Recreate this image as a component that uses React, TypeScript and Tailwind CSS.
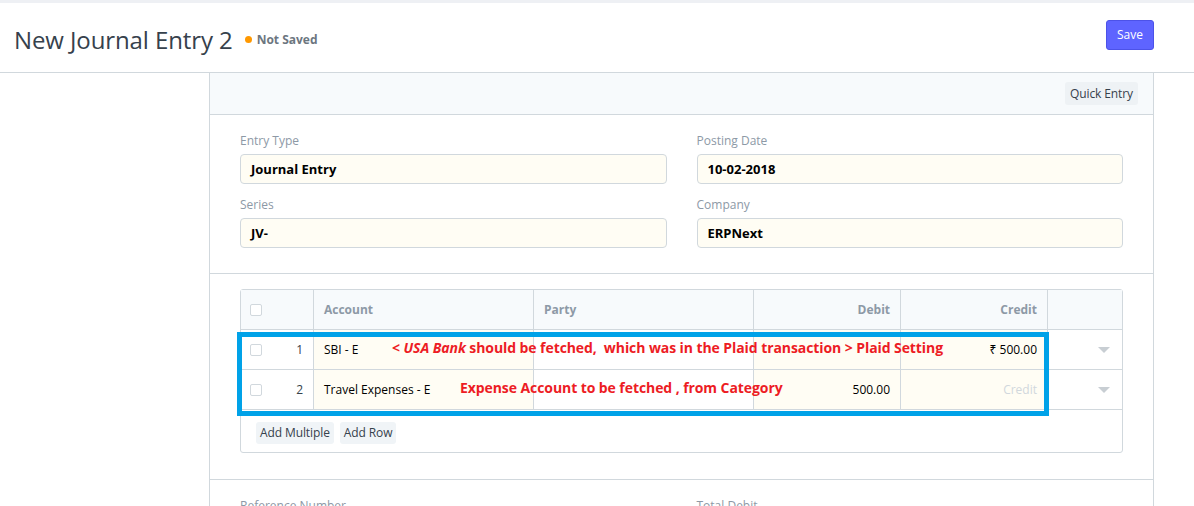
import React from "react";

const cols = "grid grid-cols-[73px_220px_220px_147px_147px_1fr]";

function Checkbox() {
  return <span className="inline-block h-[12px] w-[12px] rounded-[2px] border border-[#d1d8dd] bg-white" />;
}

function Field({ label, value }: { label: string; value: string }) {
  return (
    <div>
      <div className="mb-[5px] h-[16px] text-[12px] leading-[16px] text-[#8d99a6]">{label}</div>
      <div className="flex h-[30px] items-center rounded-[4px] border border-[#d1d8dd] bg-[#fffdf4] px-[10px] pt-[1px] text-[13px] font-bold text-black">
        {value}
      </div>
    </div>
  );
}

function Caret() {
  return (
    <svg width="12" height="6" viewBox="0 0 12 6" className="block">
      <path d="M0 0 L12 0 L6 6 Z" fill="#c8ced3" />
    </svg>
  );
}

export default function App() {
  return (
    <div className="min-h-screen bg-white text-[#36414c]" style={{ fontFamily: '"Open Sans", "Noto Sans", sans-serif' }}>
      {/* top strip */}
      <div className="h-[3px] bg-[#eef0f4]" />

      {/* page header */}
      <div className="flex h-[70px] items-center justify-between border-b border-[#d1d8dd] pl-[14px] pr-[40px]">
        <div className="mt-[4px] flex items-center">
          <h1 className="text-[24px] leading-[30px] font-normal tracking-[-0.1px] text-[#36414c]">New Journal Entry 2</h1>
          <span className="ml-[12px] h-[7px] w-[7px] rounded-full bg-[#ff9800]" />
          <span className="ml-[5px] text-[12px] font-bold text-[#6c7680]">Not Saved</span>
        </div>
        <button className="mb-[6px] h-[30px] rounded-[3px] border border-[#4c52e8] bg-[#5e64ff] px-[10px] text-[12px] text-white">
          Save
        </button>
      </div>

      <div className="flex">
        <div className="w-[209px]" />
        <div className="w-[945px] border-x border-[#d1d8dd]">
          {/* panel header */}
          <div className="flex h-[42px] items-center justify-end border-b border-[#d1d8dd] bg-[#f7fafc] pr-[15px]">
            <button className="h-[23px] rounded-[3px] bg-[#eef2f5] px-[5px] text-[12px] tracking-[-0.1px] text-[#36414c]">Quick Entry</button>
          </div>

          {/* section 1 */}
          <div className="grid grid-cols-2 gap-x-[30px] gap-y-[13px] border-b border-[#d1d8dd] px-[30px] pt-[18px] pb-[25px]">
            <Field label="Entry Type" value="Journal Entry" />
            <Field label="Posting Date" value="10-02-2018" />
            <Field label="Series" value="JV-" />
            <Field label="Company" value="ERPNext" />
          </div>

          {/* section 2: accounts table */}
          <div className="border-b border-[#d1d8dd] px-[30px] pt-[15px] pb-[26px]">
            <div className="relative rounded-[3px] border border-[#d1d8dd]">
              <div className={`${cols} h-[40px] border-b border-[#d1d8dd] bg-[#f7fafc] text-[12px] font-bold text-[#8d99a6]`}>
                <div className="flex items-center border-r border-[#d1d8dd] pl-[9px]">
                  <Checkbox />
                </div>
                <div className="flex items-center border-r border-[#d1d8dd] pl-[10px]">Account</div>
                <div className="flex items-center border-r border-[#d1d8dd] pl-[10px]">Party</div>
                <div className="flex items-center justify-end border-r border-[#d1d8dd] pr-[10px]">Debit</div>
                <div className="flex items-center justify-end border-r border-[#d1d8dd] pr-[10px]">Credit</div>
                <div />
              </div>

              {[
                { n: 1, account: "SBI - E", debit: "", credit: "₹ 500.00" },
                { n: 2, account: "Travel Expenses - E", debit: "500.00", credit: "" },
              ].map((r) => (
                <div key={r.n} className={`${cols} h-[40px] border-b border-[#d1d8dd] text-[12px] text-black`}>
                  <div className="flex items-center justify-between border-r border-[#d1d8dd] pl-[9px] pr-[10px]">
                    <Checkbox />
                    <span className="text-[#36414c]">{r.n}</span>
                  </div>
                  <div className="flex items-center border-r border-[#d1d8dd] bg-[#fffdf4] pl-[10px]">{r.account}</div>
                  <div className="border-r border-[#d1d8dd]" />
                  <div className="flex items-center justify-end border-r border-[#d1d8dd] bg-[#fffdf4] pr-[10px]">{r.debit}</div>
                  <div className="flex items-center justify-end border-r border-[#d1d8dd] bg-[#fffdf4] pr-[10px]">
                    {r.credit ? r.credit : <span className="text-[#d1d8dd]">Credit</span>}
                  </div>
                  <div className="flex items-center justify-end pr-[12px]">
                    <Caret />
                  </div>
                </div>
              ))}

              <div className="flex h-[42px] items-center gap-[6px] pl-[15px] pt-[3px]">
                <button className="h-[22px] rounded-[3px] bg-[#f0f4f7] px-[4px] text-[12px] tracking-[-0.1px] text-[#36414c]">Add Multiple</button>
                <button className="h-[22px] rounded-[3px] bg-[#f0f4f7] px-[4px] text-[12px] tracking-[-0.1px] text-[#36414c]">Add Row</button>
              </div>

              {/* annotation overlay */}
              <div className="pointer-events-none absolute left-[-4px] top-[42px] h-[84px] w-[812px] border-[5px] border-[#00a2e8]" />
              <div className="pointer-events-none absolute left-[151px] top-[48px] whitespace-pre text-[14px] leading-[20px] font-bold tracking-[-0.08px] text-[#ed1c24]">
                {"< "}<i>USA Bank</i>{" should be fetched,  which was in the Plaid transaction > Plaid Setting"}
              </div>
              <div className="pointer-events-none absolute left-[219px] top-[88px] whitespace-pre text-[14px] leading-[20px] font-bold tracking-[-0.08px] text-[#ed1c24]">
                Expense Account to be fetched , from Category
              </div>
            </div>
          </div>

          {/* section 3 */}
          <div className="grid grid-cols-2 gap-x-[30px] px-[30px] pt-[18px]">
            <div className="h-[16px] text-[12px] leading-[16px] text-[#8d99a6]">Reference Number</div>
            <div className="h-[16px] text-[12px] leading-[16px] text-[#8d99a6]">Total Debit</div>
          </div>
        </div>
      </div>
    </div>
  );
}
